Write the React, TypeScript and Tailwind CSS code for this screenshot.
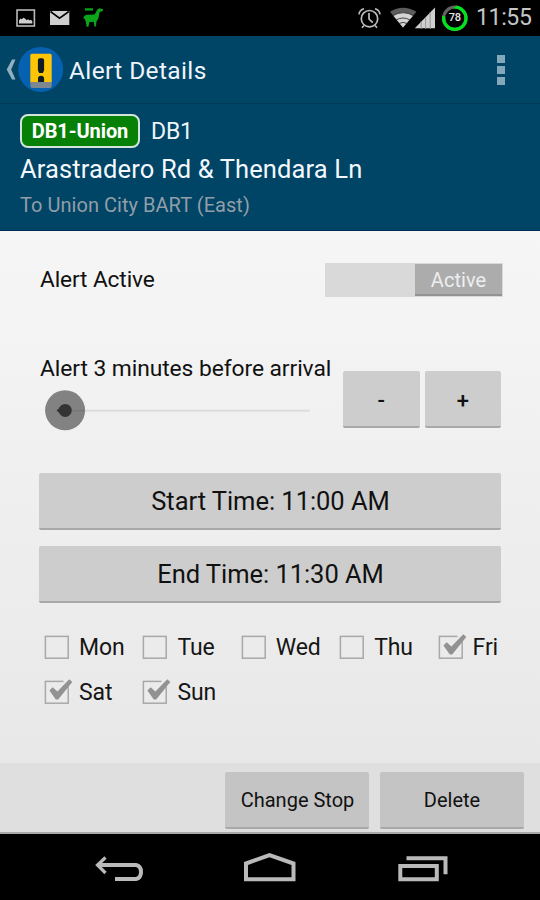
import React from "react";

function StatusBar() {
  return (
    <div className="flex h-9 shrink-0 items-center bg-black">
      <svg width="110" height="36" viewBox="0 0 110 36" className="shrink-0">
        <rect x="17" y="10" width="17.4" height="16" fill="none" stroke="#b9b9b9" strokeWidth="1.6" />
        <path d="M19 23.5v-3l1.5-2 1.5.8 1.2-1.6 1.8.7 1.7 1.9 1.5-1 1.5 1.2 1.3-.8 1.3 1.6v2.2z" fill="#cfcfcf" />
        <path d="M50 11h19.3v14H50z" fill="#cfcfcf" />
        <path d="M50.5 11.5l9 6.6 9.3-6.6" fill="none" stroke="#000" strokeWidth="1.7" />
        <path d="M52 11.2h15.5l-7.8 5.3z" fill="#cfcfcf" />
        <path d="M85 9.4h8" stroke="#079d18" strokeWidth="2.4" />
        <path d="M83.3 18.6q.6-3.6 4-3.9l7.2-.1 3.2-5.4 1.6-.9 3.8.9-.4 1.9-3 .9-1.3 6.6-1.9 3-.5 5h-1.6l-.6-4.8-4.4.2-1 4.8h-1.8l-.8-5-1-3z" fill="#0aa51b" />
      </svg>
      <svg width="130" height="36" viewBox="0 0 130 36" className="ml-auto shrink-0">
        <g fill="none" stroke="#bdbdbd" strokeWidth="1.7">
          <circle cx="22.5" cy="18.7" r="8.2" />
          <path d="M22 13v6l3.8 3.7M17 25.5l-2 2.2M28 25.5l2 2.2" />
          <path d="M12 14.3c.4-3 2.6-5 5-5.6M33 14.3c-.4-3-2.6-5-5-5.6" />
        </g>
        <path d="M56 27.5L43 11.7q13-8 26.4 0z" fill="#5c5c5c" />
        <path d="M56 27.5L46.2 15.6q9.8-6 20 0z" fill="#d4d4d4" />
        <path d="M45.5 15.8q10.7-6.2 21.2 0M48.8 20.1q7.2-4.2 14.4 0M51.7 23.6q4.3-2.4 8.8 0" fill="none" stroke="#222" strokeWidth=".8" />
        <path d="M67.8 28.3L88 7.5v20.8z" fill="#cfcfcf" />
        <path d="M74.2 21v8M78.6 17v12M83.2 12v17" stroke="#8e8e8e" strokeWidth=".9" />
        <circle cx="107.8" cy="18.2" r="11.2" fill="none" stroke="#626262" strokeWidth="3.2" />
        <circle cx="107.8" cy="18.2" r="11.2" fill="none" stroke="#00e41b" strokeWidth="3.2" pathLength="100" strokeDasharray="78 22" transform="rotate(-90 107.8 18.2)" />
        <text x="107.8" y="21.4" textAnchor="middle" fill="#e8e8e8" fontFamily="Roboto" fontWeight="500" fontSize="11" letterSpacing="-.3">78</text>
      </svg>
      <span className="-ml-px mr-[9px] w-[55px] whitespace-nowrap text-[23px] leading-9 tracking-[-0.35px] text-[#c6c6c6]">11:55</span>
    </div>
  );
}

function ActionBar() {
  return (
    <div className="flex h-[68px] shrink-0 items-center border-b border-[#003b58] bg-[#004466]">
      <svg width="66" height="68" viewBox="0 0 66 68" className="shrink-0">
        <path d="M15.5 23.5H12L6.7 33.5L12 43.5H15.5L11.2 33.5z" fill="#8eb0bf" />
        <circle cx="40.7" cy="33.4" r="22.5" fill="#0661b0" />
        <path d="M32 17.7h18q1.7 0 1.7 1.7v27H30.3v-27q0-1.7 1.7-1.7z" fill="#fdc506" />
        <path d="M30.3 46h21.4v4q0 2-2 2H32.3q-2 0-2-2z" fill="#7c8790" />
        <path d="M39.8 22.2h2.5q1.8 0 1.8 2v10l-1.2 2.7h-3.8l-1.2-2.7v-10q0-2 1.9-2zM38 46v-3.6q0-2.6 3-2.6t3.1 2.6V46z" fill="#111b24" />
      </svg>
      <span className="ml-[3px] whitespace-nowrap pt-[2px] text-[24.5px] leading-[66px] tracking-[0.37px] text-[#eef5fb]">Alert Details</span>
      <div className="ml-auto mr-[35px] flex flex-col gap-[3px]">
        <span className="size-2 bg-[#84a8bb]" />
        <span className="size-2 bg-[#84a8bb]" />
        <span className="size-2 bg-[#84a8bb]" />
      </div>
    </div>
  );
}

function StopHeader() {
  return (
    <div className="flex h-[127px] shrink-0 flex-col border-b border-[#002b55] bg-[#004466] pl-5 pt-[9px]">
      <div className="flex h-[35px] items-center">
        <span className="flex h-[34px] w-[120px] items-center justify-center whitespace-nowrap rounded-[8px] border-2 border-[#d3e5da] bg-[#078007] pt-px text-[20px] font-bold tracking-[-0.1px] text-white">DB1-Union</span>
        <span className="ml-[11px] pt-[3px] text-[23px] tracking-[-0.2px] text-[#eef5fb]">DB1</span>
      </div>
      <div className="mt-[4px] h-[34px] whitespace-nowrap text-[25.5px] leading-[34px] tracking-[0.13px] text-[#f3f8fc]">Arastradero Rd &amp; Thendara Ln</div>
      <div className="mt-[3px] h-8 whitespace-nowrap text-[20px] leading-8 tracking-[0.04px] text-[#929ea8]">To Union City BART (East)</div>
    </div>
  );
}

const buttonBase =
  "flex items-center justify-center whitespace-nowrap rounded-[2px] border-b-2 border-[#a8a8a8] text-[#111]";

function DayCheckbox({ label, checked }: { label: string; checked?: boolean }) {
  return (
    <div className="flex h-[45px] items-center">
      <svg width="30" height="30" viewBox="0 0 30 30" className="shrink-0">
        <rect x="1.4" y="3.4" width="22.8" height="21.8" fill="#ebebeb" stroke="#a8a8a8" strokeWidth="1.5" />
        {checked && (
          <>
            <path d="M19.5 3h5.2v5.5" fill="none" stroke="#ebebeb" strokeWidth="3" />
            <path d="M5.4 12.4l3.3-3.2 4.7 4.2L25.3 1.2l3 2.7L14.2 21.4h-2.4z" fill="#929292" />
          </>
        )}
      </svg>
      <span className="ml-[5px] whitespace-nowrap pt-px text-[23px] leading-[44px] tracking-[-0.1px] text-[#161616]">{label}</span>
    </div>
  );
}

function Slider() {
  return (
    <svg width="290" height="46" viewBox="0 0 290 46" className="block">
      <path d="M25 23.7h245" stroke="#dcdcdc" strokeWidth="2" />
      <circle cx="25.1" cy="23.3" r="20" fill="#828282" />
      <path d="M25 23.7h19" stroke="#777" strokeWidth="1.5" />
      <path d="M16.5 23.4l4-3.3v6.6z" fill="#333" />
      <circle cx="25.2" cy="23.4" r="6.5" fill="#333" />
    </svg>
  );
}

const days = [
  { label: "Mon" },
  { label: "Tue" },
  { label: "Wed" },
  { label: "Thu" },
  { label: "Fri", checked: true },
  { label: "Sat", checked: true },
  { label: "Sun", checked: true },
];

function Content() {
  return (
    <div className="flex h-[532px] shrink-0 flex-col bg-linear-to-b from-[#f6f6f6] to-[#e8e8e8] pl-[39px] pt-[31px]">
      <div className="flex h-[35px] w-[464px] items-center justify-between">
        <span className="ml-px whitespace-nowrap pt-px text-[22.7px] tracking-[-0.12px] text-[#111]">Alert Active</span>
        <div className="flex h-[34px] w-[178px] justify-end bg-[#d9d9d9] p-px">
          <span className="flex w-[87px] items-center justify-center border-b-2 border-[#929292] bg-[#acacac] pt-[2px] text-[20px] tracking-[0.05px] text-[#eee]">Active</span>
        </div>
      </div>
      <div className="mt-[53px] flex h-[86px]">
        <div className="ml-px w-[303px]">
          <div className="h-[37px] whitespace-nowrap pt-px text-[22.8px] leading-[36px] tracking-[-0.07px] text-[#111]">Alert 3 minutes before arrival</div>
          <Slider />
        </div>
        <div className="mt-[21px] flex gap-[5px]">
          <span className={buttonBase + " h-[57px] w-[76.5px] bg-[#cdcdcd] pt-[3px] text-[22px] font-medium"}>-</span>
          <span className={buttonBase + " h-[57px] w-[76.5px] bg-[#cdcdcd] pt-[3px] text-[22px] font-medium"}>+</span>
        </div>
      </div>
      <div className={buttonBase + " mt-[37px] h-[57px] w-[462px] bg-[#cdcdcd] pl-px pt-[2px] text-[25.5px] tracking-[-0.04px]"}>Start Time: 11:00 AM</div>
      <div className={buttonBase + " mt-4 h-[57px] w-[462px] bg-[#cdcdcd] pl-px pt-[2px] text-[25.5px] tracking-[-0.04px]"}>End Time: 11:30 AM</div>
      <div className="ml-[5px] mt-[22px] grid grid-cols-[repeat(5,98.4px)]">
        {days.map((d) => (
          <DayCheckbox key={d.label} label={d.label} checked={d.checked} />
        ))}
      </div>
    </div>
  );
}

function BottomBar() {
  return (
    <div className="flex h-[71px] shrink-0 justify-end gap-[11px] border-b-2 border-[#a8a8a8] bg-[#dfdfdf] pr-4 pt-[9px]">
      <span className={buttonBase + " h-[57px] w-[144px] bg-[#c4c4c4] pl-px pt-px text-[20px]"}>Change Stop</span>
      <span className={buttonBase + " h-[57px] w-[144px] bg-[#c4c4c4] pt-px text-[20px]"}>Delete</span>
    </div>
  );
}

function NavBar() {
  return (
    <svg width="540" height="66" viewBox="0 1 540 66" className="block shrink-0 bg-black">
      <g fill="none" stroke="#bababa" strokeWidth="4">
        <path d="M98 32h38q5 1 5 7t-5 7H115" />
        <path d="M105.5 24.5L97.5 32l8 8" strokeWidth="3.2" />
        <path d="M246 46.3V30.5L269.5 22l24 8.5v15.8z" />
        <path d="M400.3 33h36.5v13.3h-36.5z" />
        <path d="M406.5 25.2h39v16" />
      </g>
    </svg>
  );
}

export default function App() {
  return (
    <div className="flex h-[900px] w-[540px] flex-col overflow-hidden bg-black font-['Roboto',sans-serif]">
      <StatusBar />
      <ActionBar />
      <StopHeader />
      <Content />
      <BottomBar />
      <NavBar />
    </div>
  );
}
